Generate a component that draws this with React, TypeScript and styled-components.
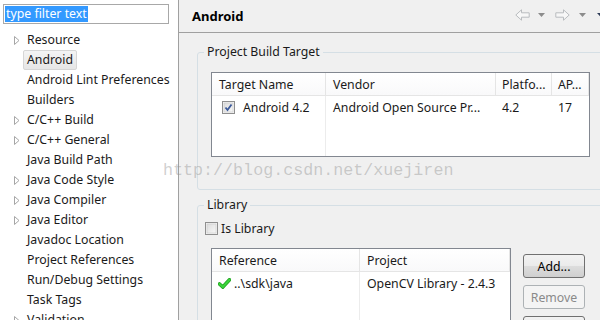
import React from "react";
import styled, { createGlobalStyle } from "styled-components";

const GlobalStyle = createGlobalStyle`
  html, body { margin: 0; padding: 0; background: #f0f0f0; }
  body { font-family: "Noto Sans", "Open Sans", sans-serif; font-size: 12.3px; color: #000; }
  * { box-sizing: border-box; }
`;

const Root = styled.div`
  position: relative;
  display: flex;
  width: 600px;
  height: 320px;
  overflow: hidden;
`;

const LeftPane = styled.div`
  width: 179px;
  flex-shrink: 0;
  background: #fff;
  border-right: 1px solid #a0a0a0;
  display: flex;
  flex-direction: column;
`;

const FilterBox = styled.div`
  margin: 4px 0 0 3px;
  width: 166px;
  height: 20px;
  border: 1px solid #a8a8a8;
  padding: 1px 1px;
  display: flex;
  align-items: center;
`;

const Selected = styled.span`
  background: #3399ff;
  color: #fff;
  height: 16px;
  line-height: 16px;
  padding: 0 1px;
  white-space: nowrap;
`;

const Tree = styled.div`
  margin-top: 6px;
  display: flex;
  flex-direction: column;
`;

const TreeRow = styled.div`
  height: 20px;
  display: flex;
  align-items: center;
  padding-left: 14px;
  white-space: nowrap;
`;

const ArrowSlot = styled.span`
  width: 9px;
  height: 20px;
  display: flex;
  align-items: center;
`;

const TreeLabel = styled.span<{ $selected?: boolean }>`
  height: 20px;
  line-height: 18px;
  padding: 0 3px;
  border: 1px solid ${(p) => (p.$selected ? "#d6d6d6" : "transparent")};
  border-radius: 2px;
  background: ${(p) => (p.$selected ? "linear-gradient(#f4f4f4, #e6e6e6)" : "transparent")};
  color: #1a1a1a;
`;

const RightPane = styled.div`
  flex: 1;
  display: flex;
  flex-direction: column;
  background: #f0f0f0;
  overflow: hidden;
`;

const Header = styled.div`
  height: 33px;
  flex-shrink: 0;
  border-bottom: 1px solid #a0a0a0;
  display: flex;
  align-items: center;
  justify-content: space-between;
  padding-left: 13px;
`;

const Title = styled.div`
  font-weight: bold;
  font-size: 13px;
  margin-top: -1px;
`;

const Nav = styled.div`
  display: flex;
  align-items: center;
  margin-right: -6px;
  margin-top: -2px;
`;

const NavIcon = styled.svg<{ $gap?: number }>`
  display: block;
  margin-left: ${(p) => p.$gap ?? 0}px;
`;

const Content = styled.div`
  display: flex;
  flex-direction: column;
  padding-left: 18px;
`;

const Group = styled.fieldset<{ $top: number }>`
  margin: ${(p) => p.$top}px 0 0 0;
  width: 420px;
  border: 1px solid #d5dfe5;
  border-radius: 3px;
  padding: 0;
  min-inline-size: 0;
`;

const Legend = styled.legend`
  margin-left: 6px;
  padding: 0 3px;
  line-height: 16px;
  color: #1a1a1a;
`;

const GroupBody = styled.div<{ $pad: string }>`
  padding: ${(p) => p.$pad};
  display: flex;
  flex-direction: column;
`;

const Table = styled.div<{ $cols: string; $w: number; $h: number; $left?: number }>`
  width: ${(p) => p.$w}px;
  height: ${(p) => p.$h}px;
  margin-left: ${(p) => p.$left ?? 0}px;
  border: 1px solid #828790;
  background: #fff;
  display: grid;
  grid-template-columns: ${(p) => p.$cols};
  grid-template-rows: 23px 22px 1fr;
  flex-shrink: 0;
`;

const HeadCell = styled.div<{ $pad?: number }>`
  display: flex;
  align-items: center;
  padding-left: ${(p) => p.$pad ?? 7}px;
  border-right: 1px solid #e5e5e5;
  border-bottom: 1px solid #e5e5e5;
  background: linear-gradient(#ffffff, #f9f9fa);
  white-space: nowrap;
  overflow: hidden;
  color: #1a1a1a;
`;

const Cell = styled.div<{ $line?: boolean; $pad?: number; $gap?: number }>`
  display: flex;
  align-items: center;
  padding-left: ${(p) => p.$pad ?? 7}px;
  border-right: 1px solid ${(p) => (p.$line ? "#ececec" : "transparent")};
  white-space: nowrap;
  overflow: hidden;
  color: #1a1a1a;
  gap: ${(p) => p.$gap ?? 8}px;
`;

const CheckRow = styled.label`
  display: flex;
  align-items: center;
  gap: 3px;
  height: 14px;
  color: #1a1a1a;
`;

const LibRow = styled.div`
  display: flex;
  margin-top: 13px;
  gap: 12px;
`;

const ButtonCol = styled.div`
  display: flex;
  flex-direction: column;
  gap: 7px;
  padding-top: 6px;
`;

const Button = styled.div<{ $disabled?: boolean }>`
  width: 62px;
  height: 24px;
  border: 1px solid ${(p) => (p.$disabled ? "#adb2b5" : "#707070")};
  border-radius: 3px;
  background: ${(p) =>
    p.$disabled
      ? "#f4f4f4"
      : "linear-gradient(#f2f2f2 0%, #ebebeb 50%, #dddddd 51%, #cfcfcf 100%)"};
  color: ${(p) => (p.$disabled ? "#8a8a8a" : "#000")};
  display: flex;
  align-items: center;
  justify-content: center;
`;

const Watermark = styled.div`
  position: absolute;
  left: 163px;
  top: 161px;
  font-family: "Liberation Mono", monospace;
  font-size: 16.7px;
  color: rgba(150, 150, 150, 0.45);
  pointer-events: none;
  white-space: nowrap;
`;

const TreeArrow = () => (
  <svg width="6" height="9" viewBox="0 0 6 9">
    <path d="M0.5 0.5 L5 4.5 L0.5 8.5 Z" fill="#fff" stroke="#a6a6a6" strokeWidth="1" />
  </svg>
);

const CheckBox = ({ checked }: { checked?: boolean }) => (
  <svg width="13" height="13" viewBox="0 0 13 13" style={{ flexShrink: 0 }}>
    <defs>
      <linearGradient id={checked ? "cbg1" : "cbg0"} x1="0" y1="0" x2="1" y2="1">
        <stop offset="0" stopColor="#dcdcdc" />
        <stop offset="1" stopColor="#f8f8f8" />
      </linearGradient>
    </defs>
    <rect x="0.5" y="0.5" width="12" height="12" fill="#f4f4f4" stroke="#8f8f8f" />
    <rect x="2" y="2" width="9" height="9" fill={`url(#${checked ? "cbg1" : "cbg0"})`} stroke="#c8c8c8" strokeWidth="0.6" />
    {checked && (
      <path d="M3.5 6.5 L5.5 9 L9.5 3.5" fill="none" stroke="#3c5a9a" strokeWidth="1.8" />
    )}
  </svg>
);

const GreenCheck = () => (
  <svg width="13" height="11" viewBox="0 0 13 11" style={{ flexShrink: 0 }}>
    <path d="M1.5 6 L4.8 9 L11.5 1.8" fill="none" stroke="#1f9e1f" strokeWidth="3.6" strokeLinecap="round" />
    <path d="M1.5 6 L4.8 9 L11.5 1.8" fill="none" stroke="#3ad43a" strokeWidth="2.2" strokeLinecap="round" />
  </svg>
);

const treeItems: { label: string; arrow?: boolean; selected?: boolean }[] = [
  { label: "Resource", arrow: true },
  { label: "Android", selected: true },
  { label: "Android Lint Preferences" },
  { label: "Builders" },
  { label: "C/C++ Build", arrow: true },
  { label: "C/C++ General", arrow: true },
  { label: "Java Build Path" },
  { label: "Java Code Style", arrow: true },
  { label: "Java Compiler", arrow: true },
  { label: "Java Editor", arrow: true },
  { label: "Javadoc Location" },
  { label: "Project References" },
  { label: "Run/Debug Settings" },
  { label: "Task Tags" },
  { label: "Validation", arrow: true },
];

export default function App() {
  return (
    <Root>
      <GlobalStyle />
      <LeftPane>
        <FilterBox>
          <Selected>type filter text</Selected>
        </FilterBox>
        <Tree>
          {treeItems.map((it) => (
            <TreeRow key={it.label}>
              <ArrowSlot>{it.arrow && <TreeArrow />}</ArrowSlot>
              <TreeLabel $selected={it.selected}>{it.label}</TreeLabel>
            </TreeRow>
          ))}
        </Tree>
      </LeftPane>
      <RightPane>
        <Header>
          <Title>Android</Title>
          <Nav>
            <NavIcon width="15" height="12" viewBox="0 0 15 12">
              <path d="M0.8 6 L6.5 0.8 L6.5 3.8 L14.2 3.8 L14.2 8.2 L6.5 8.2 L6.5 11.2 Z" fill="#f7f7f7" stroke="#b9bcbf" />
            </NavIcon>
            <NavIcon $gap={8} width="7" height="4" viewBox="0 0 7 4">
              <path d="M0 0 L7 0 L3.5 4 Z" fill="#8c8c8c" />
            </NavIcon>
            <NavIcon $gap={10} width="15" height="12" viewBox="0 0 15 12">
              <path d="M14.2 6 L8.5 0.8 L8.5 3.8 L0.8 3.8 L0.8 8.2 L8.5 8.2 L8.5 11.2 Z" fill="#f7f7f7" stroke="#b9bcbf" />
            </NavIcon>
            <NavIcon $gap={9} width="7" height="4" viewBox="0 0 7 4">
              <path d="M0 0 L7 0 L3.5 4 Z" fill="#8c8c8c" />
            </NavIcon>
            <NavIcon $gap={11} width="9" height="5" viewBox="0 0 9 5">
              <path d="M0 0 L9 0 L4.5 5 Z" fill="#2e3b57" />
            </NavIcon>
          </Nav>
        </Header>
        <Content>
          <Group $top={11}>
            <Legend>Project Build Target</Legend>
            <GroupBody $pad="12px 0 32px 13px">
              <Table $cols="114px 170px 56px 1fr" $w={379} $h={85}>
                <HeadCell>Target Name</HeadCell>
                <HeadCell>Vendor</HeadCell>
                <HeadCell $pad={6}>Platfo...</HeadCell>
                <HeadCell $pad={6}>AP...</HeadCell>
                <Cell $line $pad={10}>
                  <CheckBox checked />
                  Android 4.2
                </Cell>
                <Cell>Android Open Source Pr...</Cell>
                <Cell $pad={6}>4.2</Cell>
                <Cell $pad={6}>17</Cell>
                <Cell $line />
                <Cell />
                <Cell />
                <Cell />
              </Table>
            </GroupBody>
          </Group>
          <Group $top={7}>
            <Legend>Library</Legend>
            <GroupBody $pad="8px 0 20px 7px">
              <CheckRow>
                <CheckBox />
                Is Library
              </CheckRow>
              <LibRow>
                <Table $cols="148px 1fr" $w={300} $h={90} $left={6}>
                  <HeadCell>Reference</HeadCell>
                  <HeadCell>Project</HeadCell>
                  <Cell $line $pad={6} $gap={3}>
                    <GreenCheck />
                    ..\sdk\java
                  </Cell>
                  <Cell>OpenCV Library - 2.4.3</Cell>
                  <Cell $line />
                  <Cell />
                </Table>
                <ButtonCol>
                  <Button>Add...</Button>
                  <Button $disabled>Remove</Button>
                  <Button aria-hidden />
                </ButtonCol>
              </LibRow>
            </GroupBody>
          </Group>
        </Content>
      </RightPane>
      <Watermark>http://blog.csdn.net/xuejiren</Watermark>
    </Root>
  );
}
